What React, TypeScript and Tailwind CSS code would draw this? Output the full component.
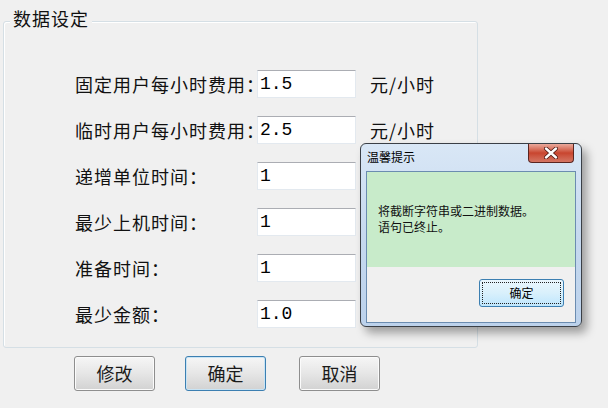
// 数据设定 form with a Win7-style "温馨提示" message box shown over it.

const rows = [
  { label: "固定用户每小时费用", value: "1.5", unit: "元/小时" },
  { label: "临时用户每小时费用", value: "2.5", unit: "元/小时" },
  { label: "递增单位时间", value: "1" },
  { label: "最少上机时间", value: "1" },
  { label: "准备时间", value: "1" },
  { label: "最少金额", value: "1.0" },
];

const cjk = "font-['Noto_Sans_CJK_SC','Noto_Sans',sans-serif]";

function WinButton({ text, focused }: { text: string; focused?: boolean }) {
  return (
    <button
      className={
        "flex h-[35px] w-[81px] items-center justify-center rounded-[3px] border bg-gradient-to-b from-[#f6f6f6] via-[#e6e6e6] to-[#d2d2d2] text-[18px] text-[#1a1a1a] " +
        (focused ? "border-[#3c7fb1] shadow-[inset_0_0_0_1px_#c8e4f5]" : "border-[#8e8e8e] shadow-[inset_0_0_0_1px_#fbfbfb]")
      }
    >
      {text}
    </button>
  );
}

function MessageBox() {
  return (
    <div className="absolute left-[360px] top-[143px] flex h-[184px] w-[222px] flex-col rounded-[6px] border border-[#3a3f46] bg-gradient-to-b from-[#d9e7f6] via-[#c6d9ef] to-[#bcd2ec] px-[5px] pb-[3px] shadow-[5px_6px_10px_rgba(0,0,0,0.35)]">
      <div className="flex h-[27px] items-start justify-between">
        <span className="mt-[5px] pl-[1px] text-[12px] leading-[16px] text-black">温馨提示</span>
        <div className="mr-[2px] flex h-[19px] w-[46px] items-center justify-center rounded-b-[4px] border border-t-0 border-[#5a2520] bg-gradient-to-b from-[#e9a99c] via-[#c8452f] to-[#d47563]">
          <svg width="14" height="12" viewBox="0 0 14 12">
            <path d="M2 1.5 L12 10.5 M12 1.5 L2 10.5" stroke="#4a1510" strokeWidth="4" strokeLinecap="round" />
            <path d="M2 1.5 L12 10.5 M12 1.5 L2 10.5" stroke="#ffffff" strokeWidth="2.4" strokeLinecap="round" />
          </svg>
        </div>
      </div>
      <div className="flex flex-1 flex-col border border-[#6b8cb0] bg-[#f0f0f0]">
        <div className="h-[95px] bg-[#c8ebca] pl-[11px] pt-[31px] text-[12px] leading-[16px] text-[#111]">
          <p>将截断字符串或二进制数据。</p>
          <p>语句已终止。</p>
        </div>
        <div className="flex flex-1 items-start justify-end pr-[11px] pt-[12px]">
          <button className="flex h-[28px] w-[85px] items-center justify-center rounded-[3px] border border-[#3c7fb1] bg-gradient-to-b from-[#eaf6fd] via-[#d9f0fc] to-[#bee6fd] p-[2px]">
            <span className="flex h-full w-full items-center justify-center border border-dotted border-[#222] text-[12px] text-black">
              确定
            </span>
          </button>
        </div>
      </div>
    </div>
  );
}

export default function App() {
  return (
    <div className={"relative h-[408px] w-[608px] overflow-hidden bg-[#f0f0f0] " + cjk}>
      <div className="ml-[3px] mt-[21px] h-[327px] w-[475px] rounded-[3px] border border-[#d5dfe5] shadow-[inset_1px_1px_0_#ffffff] pl-[71px] pt-[48px]">
        <div className="flex flex-col gap-[18px]">
          {rows.map((r) => (
            <div key={r.label} className="flex h-[28px] items-center">
              <span className="w-[182px] shrink-0 whitespace-nowrap text-[18px] leading-[28px] tracking-[1px] text-[#111]">
                {r.label}
                <span className="tracking-[-8px]">：</span>
              </span>
              <div className="flex h-[28px] w-[99px] shrink-0 items-center border border-[#e3e9ef] border-t-[#abadb3] bg-white pl-[2px] font-['Liberation_Mono',monospace] text-[18px] text-black">
                {r.value}
              </div>
              {r.unit && (
                <span className="ml-[14px] whitespace-nowrap text-[18px] tracking-[1px] text-[#111]">{r.unit}</span>
              )}
            </div>
          ))}
        </div>
      </div>
      <div className="ml-[74px] mt-[8px] flex gap-[31px]">
        <WinButton text="修改" />
        <div className="-ml-[1px] mr-[2px]">
          <WinButton text="确定" focused />
        </div>
        <WinButton text="取消" />
      </div>
      <span className="absolute left-[10px] top-[6px] bg-[#f0f0f0] px-[3px] text-[18px] leading-[24px] tracking-[1px] text-[#111]">
        数据设定
      </span>
      <MessageBox />
    </div>
  );
}
